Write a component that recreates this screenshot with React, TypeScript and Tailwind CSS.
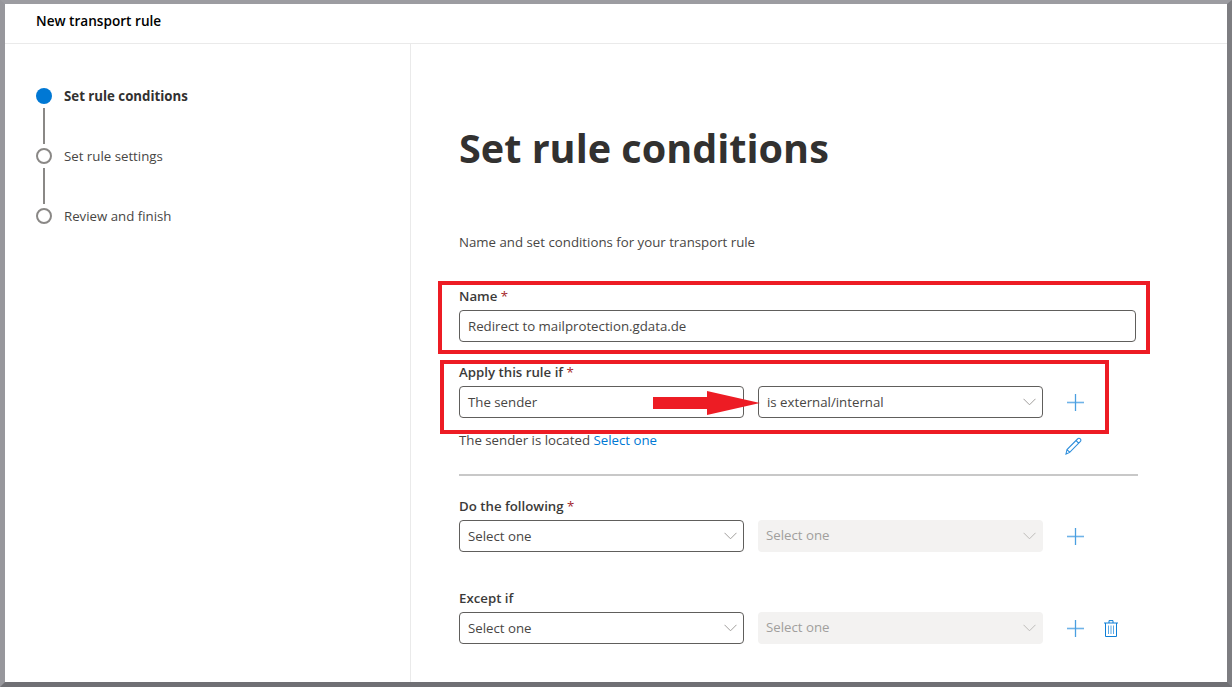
import React from 'react';

const font = { fontFamily: '"Open Sans", "Noto Sans", sans-serif' };

const PlusIcon = () => (
  <svg width="17" height="17" viewBox="0 0 17 17" className="shrink-0">
    <path d="M0 8.5h17" stroke="#6fb3e8" strokeWidth="1.6" fill="none" />
    <path d="M8.5 0v17" stroke="#4a9fe0" strokeWidth="1.3" fill="none" />
  </svg>
);

const Chevron = ({ muted }: { muted?: boolean }) => (
  <svg width="13" height="8" viewBox="0 0 13 8" className="shrink-0">
    <path d="M0.5 0.8l6 6 6-6" stroke={muted ? '#bdbbb9' : '#a09e9c'} strokeWidth="1" fill="none" />
  </svg>
);

const PencilIcon = () => (
  <svg width="17" height="18" viewBox="0 0 17 18" className="shrink-0">
    <path d="M1 17l1-4.5L12.5 2c.9-.9 2-.9 2.8-.1.8.8.8 1.9-.1 2.8L4.7 15.4 1 17zM2 12.5l2.7 2.9M11 3.5l2.9 2.9" stroke="#2f8fdc" strokeWidth="1.1" fill="none" />
  </svg>
);

const TrashIcon = () => (
  <svg width="14" height="17" viewBox="0 0 14 17" className="shrink-0">
    <path d="M0 3h14M5 3V.6h4V3M1.5 3v13.5h11V3" stroke="#0f7fd6" strokeWidth="1" fill="none" />
    <path d="M4.5 5.5v8.5M7 5.5v8.5M9.5 5.5v8.5" stroke="#5ba8e4" strokeWidth="1" fill="none" />
  </svg>
);

const Select = ({ value, chevron = true }: { value: string; chevron?: boolean }) => (
  <div className="w-[285px] h-8 border border-[#605e5c] rounded-sm pl-2 pr-[6px] flex items-center justify-between text-[13.25px] text-[#484644]">
    <span className="pt-[2px]">{value}</span>
    {chevron && <Chevron />}
  </div>
);

const DisabledSelect = () => (
  <div className="w-[285px] h-8 bg-[#f3f2f1] rounded-sm pl-2 pr-[7px] flex items-center justify-between text-[13.25px] text-[#a19f9d]">
    <span>Select one</span>
    <Chevron muted />
  </div>
);

const Label = ({ text, required, className }: { text: string; required?: boolean; className: string }) => (
  <div className={`h-5 leading-5 text-[13.25px] font-semibold text-[#3b3a39] ${className}`}>
    {text}
    {required && <span className="text-[#a4262c] font-normal"> *</span>}
  </div>
);

const steps = [
  { label: 'Set rule conditions', active: true },
  { label: 'Set rule settings', active: false },
  { label: 'Review and finish', active: false },
];

export default function App() {
  return (
    <div style={font} className="relative w-[1232px] h-[687px] overflow-hidden bg-white border-solid border-t-[4px] border-l-[5px] border-r-[5px] border-b-[5px] border-t-[#9c9ca1] border-l-[#97979c] border-r-[#7d7d81] border-b-[#707074] flex flex-col">
      <header className="h-10 shrink-0 border-b border-[#eaeaea] pl-[31px] pt-[7px] text-[13.6px] leading-5 font-semibold text-black">
        New transport rule
      </header>
      <div className="flex flex-1 min-h-0">
        {/* Wizard steps */}
        <nav className="w-[406px] shrink-0 border-r border-[#eaeaea] pl-[31px] pt-[44px]">
          {steps.map((step, i) => (
            <div key={step.label}>
              <div className="flex items-center h-4 gap-3">
                <span className={step.active ? 'w-4 h-4 rounded-full bg-[#0078d4]' : 'w-4 h-4 rounded-full border-2 border-[#8a8886]'} />
                <span className={step.active ? 'pt-[2px] text-[13.25px] font-bold text-[#323130]' : 'pt-[2px] text-[13.25px] text-[#484644]'}>{step.label}</span>
              </div>
              {i < steps.length - 1 && <div className="w-[2px] h-9 my-1 ml-[7px] bg-[#8a8886]" />}
            </div>
          ))}
        </nav>

        {/* Form */}
        <main className="flex-1 min-w-0 pl-[48px] flex flex-col items-start">
          <h1 className="mt-[76px] h-14 leading-[56px] text-[39.6px] font-bold text-[#323130]">Set rule conditions</h1>
          <p className="mt-14 h-5 leading-5 text-[13.25px] text-[#484644]">Name and set conditions for your transport rule</p>

          <Label text="Name" required className="mt-[34px]" />
          <div className="mt-1 w-[677px] h-8 border border-[#605e5c] rounded-sm px-2 flex items-center text-[13.25px] text-[#484644]">
            <span className="pt-[2px]">Redirect to mailprotection.gdata.de</span>
          </div>

          <Label text="Apply this rule if" required className="mt-5" />
          <div className="mt-1 flex items-center">
            <Select value="The sender" chevron={false} />
            <div className="ml-[14px]">
              <Select value="is external/internal" />
            </div>
            <div className="ml-6">
              <PlusIcon />
            </div>
          </div>

          <div className="mt-3 w-[623px] h-[25px] flex justify-between items-start">
            <span className="text-[13.25px] leading-5 text-[#484644]">
              The sender is located <span className="text-[#0078d4]">Select one</span>
            </span>
            <span className="mt-[7px]">
              <PencilIcon />
            </span>
          </div>

          <div className="mt-[19px] w-[679px] h-[2px] bg-[#c8c8c8]" />

          <Label text="Do the following" required className="mt-5" />
          <div className="mt-1 flex items-center">
            <Select value="Select one" />
            <div className="ml-[14px]">
              <DisabledSelect />
            </div>
            <div className="ml-6">
              <PlusIcon />
            </div>
          </div>

          <Label text="Except if" className="mt-9" />
          <div className="mt-1 flex items-center">
            <Select value="Select one" />
            <div className="ml-[14px]">
              <DisabledSelect />
            </div>
            <div className="ml-6">
              <PlusIcon />
            </div>
            <div className="ml-5">
              <TrashIcon />
            </div>
          </div>
        </main>
      </div>

      {/* Red annotations drawn on top of the screenshot */}
      <div className="absolute left-[433px] top-[277px] w-[712px] h-[73px] border-4 border-[#ed1c24]" />
      <div className="absolute left-[435px] top-[356px] w-[669px] h-[74px] border-4 border-[#ed1c24]" />
      <svg className="absolute left-[648px] top-[387px]" width="107" height="24" viewBox="0 0 107 24">
        <path d="M0 6h54V0l53 12-53 12v-6H0z" fill="#ed1c24" />
      </svg>
    </div>
  );
}
